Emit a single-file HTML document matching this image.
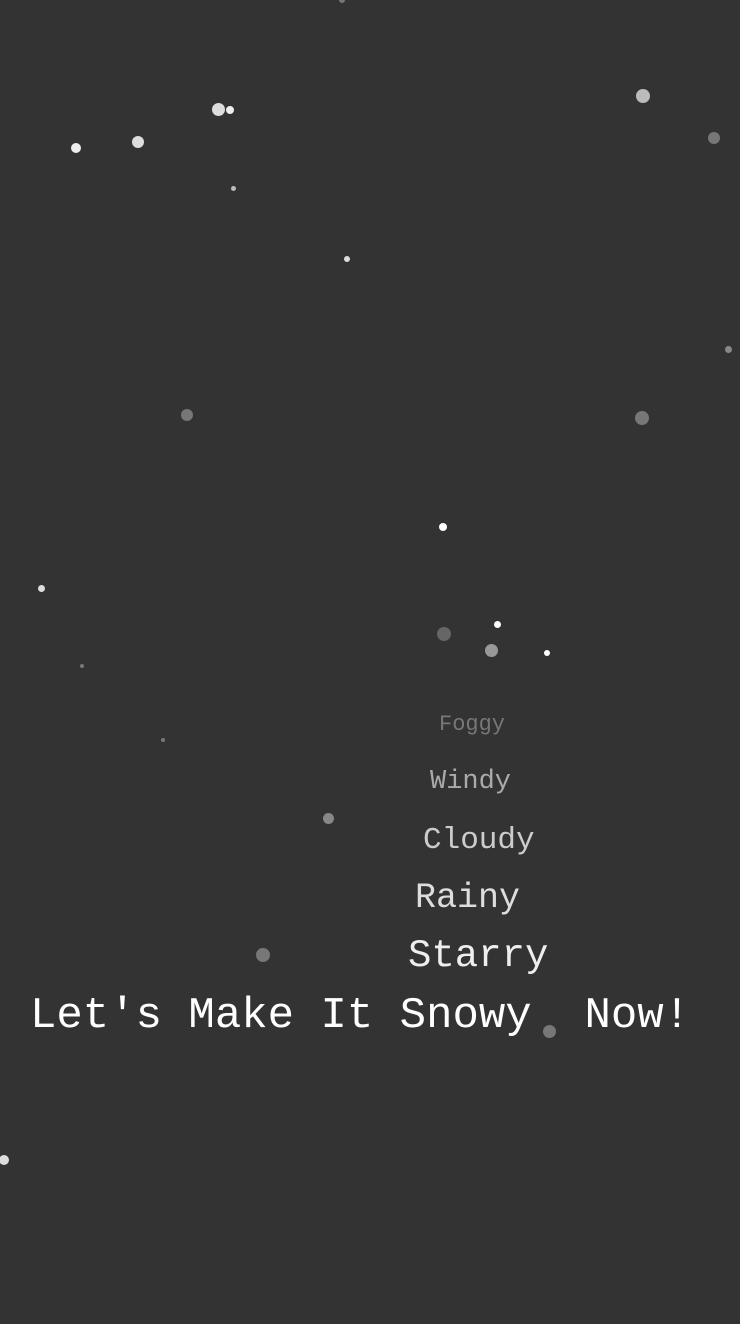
<!DOCTYPE html>
<html><head><meta charset="utf-8"><style>
html,body{margin:0;padding:0;background:#333;width:740px;height:1324px;overflow:hidden;position:relative;font-family:"Liberation Mono",monospace}
.t{position:absolute;line-height:1;white-space:pre;margin:0}
.d{position:absolute;border-radius:50%}
</style></head><body>
<div class="t" style="left:439px;top:714px;font-size:22px;color:#777">Foggy</div>
<div class="t" style="left:430px;top:769px;font-size:27px;color:#aaa">Windy</div>
<div class="t" style="left:423px;top:825px;font-size:31px;color:#ccc">Cloudy</div>
<div class="t" style="left:415px;top:881px;font-size:35px;color:#ddd">Rainy</div>
<div class="t" style="left:408px;top:937px;font-size:39px;color:#eee">Starry</div>
<div class="t" style="left:30px;top:994px;font-size:44px;color:#fff">Let's Make It Snowy  Now!</div>

<div class="d" style="left:71px;top:143px;width:10px;height:10px;background:#eee"></div>
<div class="d" style="left:132px;top:136px;width:12px;height:12px;background:#ddd"></div>
<div class="d" style="left:212px;top:103px;width:13px;height:13px;background:#ddd"></div>
<div class="d" style="left:226px;top:106px;width:8px;height:8px;background:#eee"></div>
<div class="d" style="left:231px;top:186px;width:5px;height:5px;background:#bbb"></div>
<div class="d" style="left:344px;top:256px;width:6px;height:6px;background:#ddd"></div>
<div class="d" style="left:636px;top:89px;width:14px;height:14px;background:#bbb"></div>
<div class="d" style="left:708px;top:132px;width:12px;height:12px;background:#777"></div>
<div class="d" style="left:725px;top:346px;width:7px;height:7px;background:#888"></div>
<div class="d" style="left:181px;top:409px;width:12px;height:12px;background:#777"></div>
<div class="d" style="left:635px;top:411px;width:14px;height:14px;background:#777"></div>
<div class="d" style="left:439px;top:523px;width:8px;height:8px;background:#fff"></div>
<div class="d" style="left:38px;top:585px;width:7px;height:7px;background:#ddd"></div>
<div class="d" style="left:437px;top:627px;width:14px;height:14px;background:#666"></div>
<div class="d" style="left:494px;top:621px;width:7px;height:7px;background:#fff"></div>
<div class="d" style="left:485px;top:644px;width:13px;height:13px;background:#999"></div>
<div class="d" style="left:544px;top:650px;width:6px;height:6px;background:#fff"></div>
<div class="d" style="left:80px;top:664px;width:4px;height:4px;background:#777"></div>
<div class="d" style="left:161px;top:738px;width:4px;height:4px;background:#777"></div>
<div class="d" style="left:323px;top:813px;width:11px;height:11px;background:#888"></div>
<div class="d" style="left:256px;top:948px;width:14px;height:14px;background:#777"></div>
<div class="d" style="left:543px;top:1025px;width:13px;height:13px;background:#777"></div>
<div class="d" style="left:-1px;top:1155px;width:10px;height:10px;background:#ddd"></div>
<div class="d" style="left:339px;top:-3px;width:6px;height:6px;background:#777"></div>
</body></html>
